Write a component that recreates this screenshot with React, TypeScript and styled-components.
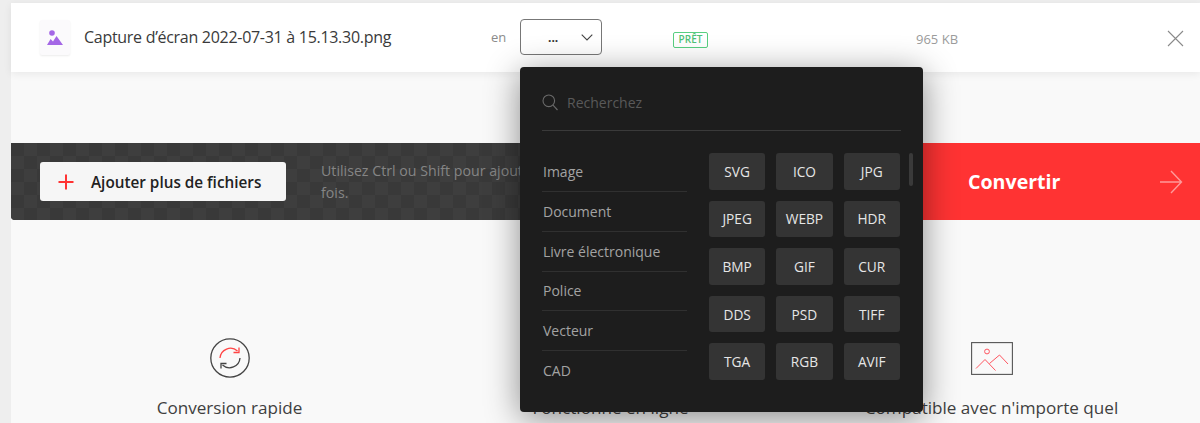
import React from 'react'
import styled, { createGlobalStyle } from 'styled-components'

const GlobalStyle = createGlobalStyle`
  html, body {
    margin: 0;
    padding: 0;
    height: 423px;
    overflow: hidden;
    background: #eeeeee;
    font-family: 'Open Sans', 'Liberation Sans', sans-serif;
  }
`

const Page = styled.div`
  height: 423px;
  box-sizing: border-box;
  padding-top: 3px;
  padding-left: 11px;
  overflow: hidden;
  background: #eeeeee;
`

const Content = styled.div`
  height: 420px;
  background: #f9f9f9;
`

const FileRow = styled.div`
  display: flex;
  align-items: center;
  height: 69px;
  background: #fff;
  padding-left: 29px;
  box-shadow: 0 2px 8px rgba(0, 0, 0, 0.07);
`

const FileIcon = styled.div`
  width: 30px;
  height: 35px;
  flex: none;
  display: flex;
  align-items: center;
  justify-content: center;
  background: #fbfafc;
  border-radius: 2px;
  box-shadow: 0 1px 2px rgba(0, 0, 0, 0.08);
`

const FileName = styled.div`
  width: 407px;
  margin-left: 14px;
  flex: none;
  font-size: 16px;
  letter-spacing: -0.29px;
  color: #3a3a3a;
  white-space: nowrap;
  margin-top: -2px;
`

const ToLabel = styled.div`
  width: 29px;
  flex: none;
  font-size: 13px;
  color: #8b8b8b;
  margin-top: -2px;
`

const SelectWrap = styled.div`
  position: relative;
  width: 82px;
  flex: none;
  margin-top: -1px;
  margin-right: 71px;
`

const SelectBox = styled.div`
  height: 36px;
  box-sizing: border-box;
  border: 1px solid #777;
  border-radius: 4px;
  background: #fff;
  display: flex;
  align-items: center;
  padding-left: 27px;
  gap: 23px;
  font-size: 12px;
  font-weight: 700;
  color: #333;
`

const Dots = styled.span`
  line-height: 1;
  margin-top: 2px;
`

const Menu = styled.div`
  position: absolute;
  top: 48px;
  left: 0;
  width: 403px;
  height: 345px;
  box-sizing: border-box;
  padding: 0 22px;
  background: #1d1d1d;
  border-radius: 4px;
  box-shadow: 0 6px 34px rgba(0, 0, 0, 0.45);
  z-index: 10;
`

const SearchRow = styled.div`
  height: 55px;
  padding-top: 8px;
  display: flex;
  align-items: center;
  gap: 9px;
  border-bottom: 1px solid #3a3a3a;
  font-size: 14px;
  color: #595959;
`

const MenuBody = styled.div`
  display: flex;
  position: relative;
`

const CategoryList = styled.div`
  width: 145px;
  flex: none;
  margin-top: 21.5px;
`

const Category = styled.div<{ $last?: boolean }>`
  height: 39.7px;
  box-sizing: border-box;
  padding-left: 1px;
  display: flex;
  align-items: center;
  font-size: 14px;
  color: #a3a3a3;
  border-bottom: ${({ $last }) => ($last ? 'none' : '1px solid #303030')};
`

const FormatGrid = styled.div`
  margin-left: 22px;
  margin-top: 22px;
  display: grid;
  grid-template-columns: repeat(3, 56.3px);
  grid-auto-rows: 36.6px;
  gap: 11px 11px;
`

const FormatButton = styled.div`
  display: flex;
  align-items: center;
  justify-content: center;
  background: #343434;
  border-radius: 3px;
  font-size: 13.7px;
  color: #e6e6e6;
`

const ScrollThumb = styled.div`
  position: absolute;
  top: 22px;
  right: -12px;
  width: 4px;
  height: 33px;
  border-radius: 2px;
  background: #3a3a3a;
`

const StatusCell = styled.div`
  width: 243px;
  flex: none;
  margin-top: -2px;
`

const ReadyBadge = styled.span`
  display: inline-block;
  box-sizing: border-box;
  width: 35px;
  height: 16px;
  line-height: 13px;
  text-align: center;
  border: 1px solid #58cf81;
  border-radius: 2px;
  font-size: 10px;
  font-weight: 600;
  color: #4fc277;
`

const FileSize = styled.div`
  width: 251px;
  flex: none;
  font-size: 13px;
  color: #9b9b9b;
  margin-top: 2px;
`

const CloseButton = styled.div`
  display: flex;
  margin-top: 2px;
  color: #8a8a8a;
`

const ActionBar = styled.div`
  display: flex;
  height: 77px;
  margin-top: 71px;
  border-radius: 0 0 0 4px;
  overflow: hidden;
`

const DarkPanel = styled.div`
  flex: 1;
  display: flex;
  align-items: center;
  padding-left: 29px;
  background-color: #393939;
  background-image: conic-gradient(#3e3e3e 25%, transparent 25%, transparent 50%, #3e3e3e 50%, #3e3e3e 75%, transparent 75%);
  background-size: 26px 26px;
`

const AddButton = styled.div`
  width: 246px;
  height: 39px;
  flex: none;
  box-sizing: border-box;
  display: flex;
  align-items: center;
  padding-left: 17px;
  gap: 16px;
  background: #f6f6f6;
  border-radius: 3px;
  font-size: 15.3px;
  font-weight: 600;
  color: #222;
  white-space: nowrap;
`

const Hint = styled.div`
  width: 375px;
  margin-left: 35px;
  font-size: 14.2px;
  line-height: 22px;
  color: #858585;
`

const ConvertButton = styled.div`
  width: 300px;
  flex: none;
  box-sizing: border-box;
  display: flex;
  align-items: center;
  justify-content: space-between;
  padding: 0 17px 0 68px;
  background: #ff3333;
  font-size: 19.6px;
  font-weight: 700;
  color: #fff;
`

const Features = styled.div`
  display: grid;
  grid-template-columns: repeat(3, 381px);
  padding-left: 28px;
  margin-top: 118px;
`

const Feature = styled.div`
  display: flex;
  flex-direction: column;
  align-items: center;
  gap: 18px;
  font-size: 17.1px;
  color: #3f3f3f;
  white-space: nowrap;
`

const IconSlot = styled.div`
  height: 40px;
  display: flex;
  align-items: center;
  justify-content: center;
`

const categories = ['Image', 'Document', 'Livre électronique', 'Police', 'Vecteur', 'CAD']
const formats = ['SVG', 'ICO', 'JPG', 'JPEG', 'WEBP', 'HDR', 'BMP', 'GIF', 'CUR', 'DDS', 'PSD', 'TIFF', 'TGA', 'RGB', 'AVIF']

const App: React.FC = () => {
  return (
    <Page>
      <GlobalStyle />
      <Content>
        <FileRow>
          <FileIcon>
            <svg width="16" height="15" viewBox="0 0 16 15">
              <circle cx="5" cy="3" r="2.8" fill="#a467e6" />
              <path d="M0 15 L3.6 9 L6 11.5 L9.5 6 L16 15 Z" fill="#a467e6" />
            </svg>
          </FileIcon>
          <FileName>Capture d’écran 2022-07-31 à 15.13.30.png</FileName>
          <ToLabel>en</ToLabel>
          <SelectWrap>
            <SelectBox>
              <Dots>...</Dots>
              <svg width="12" height="7" viewBox="0 0 12 7" fill="none" stroke="#444" strokeWidth="1.1">
                <path d="M0.7 0.7 L6 6 L11.3 0.7" />
              </svg>
            </SelectBox>
            <Menu>
              <SearchRow>
                <svg width="16" height="17" viewBox="0 0 16 17" fill="none" stroke="#6a6a6a" strokeWidth="1.1">
                  <circle cx="6.8" cy="6.8" r="5.8" />
                  <path d="M11 11.2 L15.5 16" />
                </svg>
                Recherchez
              </SearchRow>
              <MenuBody>
                <CategoryList>
                  {categories.map((name, i) => (
                    <Category key={name} $last={i === categories.length - 1}>{name}</Category>
                  ))}
                </CategoryList>
                <FormatGrid>
                  {formats.map(name => <FormatButton key={name}>{name}</FormatButton>)}
                </FormatGrid>
                <ScrollThumb />
              </MenuBody>
            </Menu>
          </SelectWrap>
          <StatusCell><ReadyBadge>PRÊT</ReadyBadge></StatusCell>
          <FileSize>965 KB</FileSize>
          <CloseButton>
            <svg width="17" height="17" viewBox="0 0 17 17" stroke="currentColor" strokeWidth="1.1">
              <path d="M1 1 L16 16 M16 1 L1 16" />
            </svg>
          </CloseButton>
        </FileRow>

        <ActionBar>
          <DarkPanel>
            <AddButton>
              <svg width="18" height="18" viewBox="0 0 18 18" stroke="#ff3333" strokeWidth="2">
                <path d="M9 1.5 V16.5 M1.5 9 H16.5" />
              </svg>
              Ajouter plus de fichiers
            </AddButton>
            <Hint>Utilisez Ctrl ou Shift pour ajouter plusieurs fichiers à la fois.</Hint>
          </DarkPanel>
          <ConvertButton>
            Convertir
            <svg width="24" height="26" viewBox="0 0 24 26" fill="none" stroke="#ff9a9a" strokeWidth="1.4">
              <path d="M1 13 H22 M12 2 L22.5 13 L12 24" />
            </svg>
          </ConvertButton>
        </ActionBar>

        <Features>
          <Feature>
            <IconSlot>
              <svg width="40" height="40" viewBox="0 0 40 40" fill="none" strokeWidth="1.3">
                <circle cx="20" cy="20" r="19.2" stroke="#444" />
                <path d="M10 20 A10.5 10.5 0 0 1 27.5 13" stroke="#ff4444" />
                <path d="M23.5 14.5 L29 14.5 L29 9.5" stroke="#ff4444" />
                <path d="M30 20 A10.5 10.5 0 0 1 12.5 27" stroke="#444" />
                <path d="M16.5 25.5 L11 25.5 L11 30.5" stroke="#444" />
              </svg>
            </IconSlot>
            Conversion rapide
          </Feature>
          <Feature>
            <IconSlot />
            Fonctionne en ligne
          </Feature>
          <Feature>
            <IconSlot>
              <svg width="42" height="33" viewBox="0 0 42 33" fill="none">
                <rect x="0.6" y="0.6" width="40.8" height="31.8" stroke="#555" strokeWidth="1.1" />
                <circle cx="16" cy="9.5" r="2.4" stroke="#ff5560" strokeWidth="1" />
                <path d="M5 26.5 L14 17.5 L24.5 28.5 M18.5 21.5 L28.5 13 L37 22" stroke="#ff5560" strokeWidth="1" />
              </svg>
            </IconSlot>
            Compatible avec n'importe quel
          </Feature>
        </Features>
      </Content>
    </Page>
  )
}

export default App
